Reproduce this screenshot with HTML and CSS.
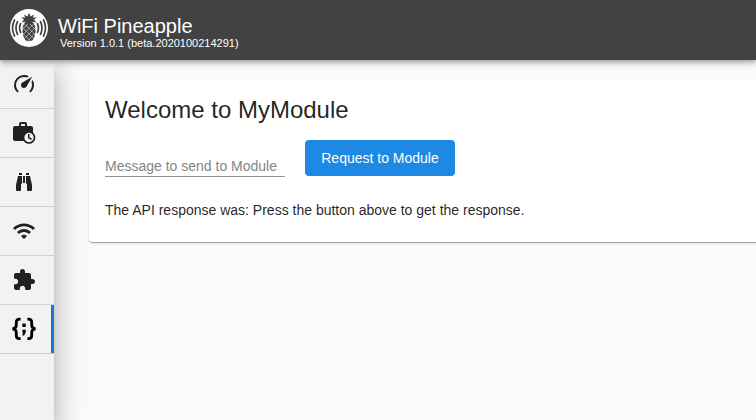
FILE: index.html
```html
<!DOCTYPE html>
<html lang="en">
<head>
<meta charset="utf-8">
<title>WiFi Pineapple</title>
<link rel="stylesheet" href="styles.css">
</head>
<body>
<header class="toolbar">
  <svg class="logo" viewBox="0 0 38 38">
    <circle cx="19" cy="19" r="19" fill="#fff"/>
    <g fill="#424242">
      <path d="M19 3.800l1.600 3.600 3.300-1.800-.9 3.200 3.800-.6-2.800 2.600 2.600 2.600-4.300-.6L19 14.500l-3.300-1.700-4.300.6 2.600-2.600-2.800-2.600 3.800.6-.9-3.200 3.300 1.800z"/>
      <path d="M15 13.300q4-1.200 8 0 2.800 3.700 2.500 9-.5 6.500-3.200 9.200-3.300 1.500-6.600 0-2.700-2.700-3.200-9.200-.3-5.300 2.500-9z"/>
    </g>
    <g fill="none" stroke="#fff" stroke-width=".5">
      <path d="M12 18l12 12M14 14.500l12 12M12 23.500l9 9M20 15l6 6M26 18L14 30M24 14.500l-12 12M26 23.500l-9 9M18 15l-6 6"/>
    </g>
    <g fill="none" stroke="#424242" stroke-width="1.700" stroke-linecap="round">
      <path d="M10.600 14.700q-2 4.300 0 8.600M7.500 12.700q-3 6.300 0 12.600M4.500 11q-4 8 0 16M27.400 14.700q2 4.300 0 8.600M30.500 12.700q3 6.300 0 12.600M33.500 11q4 8 0 16"/>
    </g>
  </svg>
  <div class="brand">
    <div class="brand-name">WiFi Pineapple</div>
    <div class="brand-version">Version 1.0.1 (beta.2020100214291)</div>
  </div>
</header>
<div class="layout">
  <nav class="sidebar">
    <a class="nav-item"><svg class="icon" viewBox="0 0 24 24"><path d="M12,16A3,3 0 0,1 9,13C9,11.88 9.61,10.9 10.5,10.39L20.21,4.77L14.68,14.35C14.18,15.33 13.17,16 12,16M12,3C13.81,3 15.5,3.5 16.97,4.32L14.87,5.53C14,5.19 13,5 12,5A8,8 0 0,0 4,13C4,15.21 4.89,17.21 6.34,18.65H6.35C6.74,19.04 6.74,19.67 6.35,20.06C5.96,20.45 5.32,20.45 4.93,20.07V20.07C3.12,18.26 2,15.76 2,13A10,10 0 0,1 12,3M22,13C22,15.76 20.88,18.26 19.07,20.07V20.07C18.68,20.45 18.05,20.45 17.66,20.06C17.27,19.67 17.27,19.04 17.66,18.65V18.65C19.11,17.2 20,15.21 20,13C20,12 19.81,11 19.46,10.1L20.67,8C21.5,9.5 22,11.18 22,13Z"/></svg></a>
    <a class="nav-item"><svg class="icon" viewBox="0 0 24 24"><path fill-rule="evenodd" d="M9 1h4a2 2 0 0 1 2 2v2h4a2 2 0 0 1 2 2v13H3a2 2 0 0 1-2-2V7a2 2 0 0 1 2-2h4V3a2 2 0 0 1 2-2zM9 3v2h4V3z"/><circle class="clock" cx="17" cy="16.500" r="5.500"/><path d="M16 13h1.500v3.320l2.440 1.410-.75 1.300L16 17.190z"/></svg></a>
    <a class="nav-item"><svg class="icon" viewBox="0 0 24 24"><path d="M11,6H13V13H11V6M9,20A1,1 0 0,1 8,21H5A1,1 0 0,1 4,20V15L6,6H10V13A1,1 0 0,1 9,14V20M10,5H7V3H10V5M15,20V14A1,1 0 0,1 14,13V6H18L20,15V20A1,1 0 0,1 19,21H16A1,1 0 0,1 15,20M14,5V3H17V5H14Z"/></svg></a>
    <a class="nav-item"><svg class="icon" viewBox="0 0 24 24"><path d="M1 9l2 2c4.970-4.970 13.030-4.970 18 0l2-2C16.930 2.930 7.080 2.930 1 9zm8 8l3 3 3-3c-1.650-1.660-4.340-1.660-6 0zm-4-4l2 2c2.760-2.760 7.240-2.760 10 0l2-2C15.140 9.140 8.870 9.140 5 13z"/></svg></a>
    <a class="nav-item"><svg class="icon" viewBox="0 0 24 24"><path d="M20.500 11H19V7c0-1.100-.9-2-2-2h-4V3.500C13 2.120 11.880 1 10.500 1S8 2.120 8 3.500V5H4c-1.100 0-1.990.9-1.990 2v3.800H3.500c1.490 0 2.700 1.210 2.700 2.700s-1.210 2.700-2.700 2.700H2V20c0 1.100.9 2 2 2h3.800v-1.500c0-1.490 1.210-2.700 2.700-2.700 1.490 0 2.700 1.210 2.700 2.700V22H17c1.100 0 2-.9 2-2v-4h1.500c1.380 0 2.500-1.120 2.500-2.500S21.880 11 20.500 11z"/></svg></a>
    <a class="nav-item active"><svg class="icon module" viewBox="0 0 24 24"><path class="brace" d="M8.600 2.200H7.500Q4.300 2.200 4.300 5.400V8.200Q4.300 11.600 .4 11.800Q4.300 12 4.300 15.400V18.400Q4.300 21.600 7.500 21.600H8.600M15.400 2.200H16.500Q19.700 2.200 19.700 5.400V8.200Q19.700 11.600 23.600 11.800Q19.700 12 19.700 15.400V18.400Q19.700 21.600 16.500 21.600H15.400"/><path d="M10.400 6.500h3.300v3.400h-3.300zM10.400 12.700h3.300v2.500l-1.600 3.400h-1.900l.9-2.900h-.7z"/></svg></a>
  </nav>
  <main class="content">
    <section class="card">
      <h1 class="title">Welcome to MyModule</h1>
      <div class="form">
        <input class="message" type="text" placeholder="Message to send to Module">
        <button class="submit">Request to Module</button>
      </div>
      <p class="response">The API response was: Press the button above to get the response.</p>
    </section>
  </main>
</div>
</body>
</html>
```
FILE: styles.css
```css
* { box-sizing: border-box; }
body {
  margin: 0;
  height: 420px;
  overflow: hidden;
  display: flex;
  flex-direction: column;
  background: #fafafa;
  color: rgba(0, 0, 0, .87);
  font: 14px/20px "Liberation Sans", Arial, sans-serif;
}
.toolbar {
  position: relative;
  z-index: 3;
  flex: 0 0 60px;
  display: flex;
  align-items: flex-start;
  padding: 9px 10px;
  background: #424242;
  color: #fff;
  box-shadow: 0 2px 4px -1px rgba(0, 0, 0, .2), 0 4px 5px rgba(0, 0, 0, .14), 0 1px 10px rgba(0, 0, 0, .12);
}
.logo { width: 38px; height: 38px; }
.brand { padding: 6px 0 0 10px; }
.brand-name { font-size: 20px; line-height: 23px; }
.brand-version { padding-left: 2px; font-size: 11px; line-height: 10px; }
.layout { flex: 1; display: flex; min-height: 0; }
.sidebar {
  position: relative;
  z-index: 2;
  flex: 0 0 54px;
  background: #f2f2f2;
  box-shadow: 0 8px 10px -5px rgba(0, 0, 0, .2), 0 16px 24px 2px rgba(0, 0, 0, .14), 0 6px 30px 5px rgba(0, 0, 0, .12);
}
.nav-item {
  display: flex;
  align-items: center;
  height: 49px;
  padding-left: 12px;
  border-bottom: 1px solid #d1d1d1;
}
.nav-item.active { box-shadow: inset -3px 0 #1976d2; }
.icon { width: 24px; height: 24px; fill: #212121; }
.clock { fill: #f2f2f2; stroke: #212121; stroke-width: 1.7; }
.module { fill: #000; }
.brace { fill: none; stroke: #000; stroke-width: 2.8; }
.content { flex: 1; min-width: 0; padding: 20px 0 0 35px; }
.card {
  width: 700px;
  height: 162px;
  padding: 16px;
  border-radius: 4px;
  background: #fff;
  box-shadow: 0 2px 1px -1px rgba(0, 0, 0, .2), 0 1px 1px rgba(0, 0, 0, .14), 0 1px 3px rgba(0, 0, 0, .12);
}
.title { margin: 0; font-size: 24px; font-weight: 400; line-height: 28px; }
.form { display: flex; align-items: flex-start; gap: 20px; margin-top: 16px; }
.message {
  width: 180px;
  height: 21px;
  margin-top: 16px;
  padding: 0;
  border: 0;
  border-bottom: 1px solid #949494;
  outline: 0;
  background: none;
  font: inherit;
}
.message::placeholder { color: #858585; }
.submit {
  width: 150px;
  height: 36px;
  padding: 0;
  border: 0;
  border-radius: 4px;
  background: #1e88e5;
  color: #fff;
  font: inherit;
}
.response { margin: 23px 0 0; }
```
